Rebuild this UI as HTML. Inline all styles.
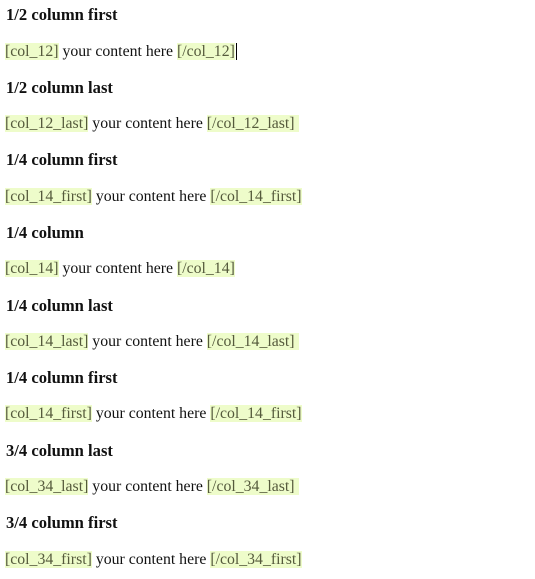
<!DOCTYPE html>
<html><head><style>
body{margin:0;background:#fff;width:535px;height:579px;overflow:hidden;font-family:"Liberation Serif",serif;font-size:15.8px;color:#111;position:relative}
.h{position:absolute;left:6px;font-weight:bold;line-height:20px;font-size:16.6px}
.c{position:absolute;left:5px;line-height:20px;white-space:nowrap}
.t{background:#eefcca;color:#555a3c}
</style></head><body>
<div class="h" style="top:5px">1/2 column first</div>
<div class="c" style="top:42px"><span class="t">[col_12]</span> your content here <span class="t">[/col_12]</span><span style="border-left:1px solid #000;margin-left:1px"></span></div>
<div class="h" style="top:78px">1/2 column last</div>
<div class="c" style="top:114px"><span class="t">[col_12_last]</span> your content here <span class="t">[/col_12_last]&nbsp;</span></div>
<div class="h" style="top:150px">1/4 column first</div>
<div class="c" style="top:187px"><span class="t">[col_14_first]</span> your content here <span class="t">[/col_14_first]</span></div>
<div class="h" style="top:223px">1/4 column</div>
<div class="c" style="top:259px"><span class="t">[col_14]</span> your content here <span class="t">[/col_14]</span></div>
<div class="h" style="top:296px">1/4 column last</div>
<div class="c" style="top:332px"><span class="t">[col_14_last]</span> your content here <span class="t">[/col_14_last]&nbsp;</span></div>
<div class="h" style="top:368px">1/4 column first</div>
<div class="c" style="top:404px"><span class="t">[col_14_first]</span> your content here <span class="t">[/col_14_first]</span></div>
<div class="h" style="top:441px">3/4 column last</div>
<div class="c" style="top:477px"><span class="t">[col_34_last]</span> your content here <span class="t">[/col_34_last]&nbsp;</span></div>
<div class="h" style="top:513px">3/4 column first</div>
<div class="c" style="top:550px"><span class="t">[col_34_first]</span> your content here <span class="t">[/col_34_first]</span></div>
</body></html>
